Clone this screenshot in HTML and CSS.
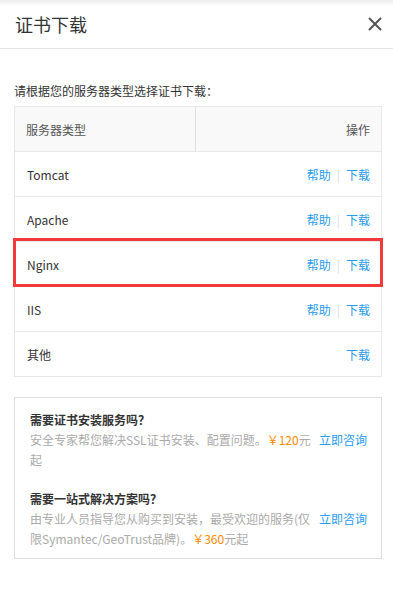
FILE: index.html
```html
<!DOCTYPE html>
<html lang="zh-CN">
<head>
  <meta charset="UTF-8" />
  <meta name="viewport" content="width=device-width, initial-scale=1" />
  <title>证书下载</title>
  <link rel="stylesheet" href="styles.css">
</head>
<body>

  <header class="dialog-header">
    <h1>证书下载</h1>
    <svg class="close" width="16" height="16" viewBox="0 0 16 16">
      <path d="M2 2 L14 14 M14 2 L2 14" stroke="#555" stroke-width="2" fill="none" />
    </svg>
  </header>

  <div class="content">
    <p class="intro">请根据您的服务器类型选择证书下载：</p>

    <div class="server-table">
      <div class="row head">
        <div class="cell name">服务器类型</div>
        <div class="cell ops">操作</div>
      </div>
      <div class="row">
        <div class="cell name">Tomcat</div>
        <div class="cell ops"><a href="#">帮助</a><span class="sep">|</span><a href="#">下载</a></div>
      </div>
      <div class="row">
        <div class="cell name">Apache</div>
        <div class="cell ops"><a href="#">帮助</a><span class="sep">|</span><a href="#">下载</a></div>
      </div>
      <div class="row highlight">
        <div class="cell name">Nginx</div>
        <div class="cell ops"><a href="#">帮助</a><span class="sep">|</span><a href="#">下载</a></div>
      </div>
      <div class="row">
        <div class="cell name">IIS</div>
        <div class="cell ops"><a href="#">帮助</a><span class="sep">|</span><a href="#">下载</a></div>
      </div>
      <div class="row">
        <div class="cell name">其他</div>
        <div class="cell ops"><a href="#">下载</a></div>
      </div>
    </div>

    <div class="service-box">
      <div class="service">
        <h3>需要证书安装服务吗？</h3>
        <div class="service-line">
          <p>安全专家帮您解决SSL证书安装、配置问题。<span class="price">￥120</span>元起</p>
          <a href="#">立即咨询</a>
        </div>
      </div>
      <div class="service">
        <h3>需要一站式解决方案吗？</h3>
        <div class="service-line">
          <p>由专业人员指导您从购买到安装，最受欢迎的服务(仅限Symantec/GeoTrust品牌)。<span class="price">￥360</span>元起</p>
          <a href="#">立即咨询</a>
        </div>
      </div>
    </div>
  </div>

</body>
</html>
```

FILE: styles.css
```css
body {
  margin: 0;
  padding: 0;
  background: #fff;
  color: #333;
  font-family: "Noto Sans CJK SC", "Noto Sans", sans-serif;
  font-size: 12px;
}

a {
  color: #2a9cf0;
  text-decoration: none;
}

.dialog-header {
  height: 48px;
  display: flex;
  align-items: center;
  justify-content: space-between;
  padding: 0 10px 0 15px;
  border-bottom: 1px solid #e5e5e5;
  background: linear-gradient(#ececec, #fff 6px);
}

.dialog-header h1 {
  margin: 0;
  font-size: 18px;
  font-weight: normal;
  color: #333;
}

.close {
  margin-top: -1px;
}

.content {
  padding: 0 11px 0 14px;
}

.intro {
  margin: 0;
  padding-top: 33px;
  line-height: 18px;
  color: #333;
}

.server-table {
  margin-top: 6px;
  border: 1px solid #e8e8e8;
}

.row {
  display: grid;
  grid-template-columns: 181px 1fr;
  height: 45px;
  border-top: 1px solid #e8e8e8;
  box-sizing: border-box;
}

.row.head {
  border-top: none;
  height: 44px;
  background: #f9f9f9;
}

.row.head .name {
  border-right: 1px solid #e0e0e0;
  padding-left: 11px;
  color: #555;
}

.row.head .ops {
  color: #555;
}

.cell {
  display: flex;
  align-items: center;
}

.cell.name {
  padding-left: 12px;
}

.cell.ops {
  justify-content: flex-end;
  padding-right: 11px;
}

.sep {
  color: #ddd;
  margin: 0 6px;
}

.highlight {
  position: relative;
}

.highlight::after {
  content: "";
  position: absolute;
  top: -4px;
  bottom: -1px;
  left: -2px;
  right: -2px;
  border: 3px solid #f23a3a;
}

.service-box {
  margin-top: 20px;
  border: 1px solid #ddd;
  padding: 12px 14px 9px 15px;
}

.service + .service {
  margin-top: 19px;
}

.service h3 {
  margin: 0;
  font-size: 12px;
  line-height: 20px;
  color: #333;
}

.service-line {
  display: flex;
  align-items: flex-start;
  gap: 4px;
  line-height: 20px;
}

.service-line p {
  flex: 1;
  margin: 0;
  color: #aaa;
}

.service-line a {
  flex-shrink: 0;
}

.price {
  color: #ff8a00;
}
```
